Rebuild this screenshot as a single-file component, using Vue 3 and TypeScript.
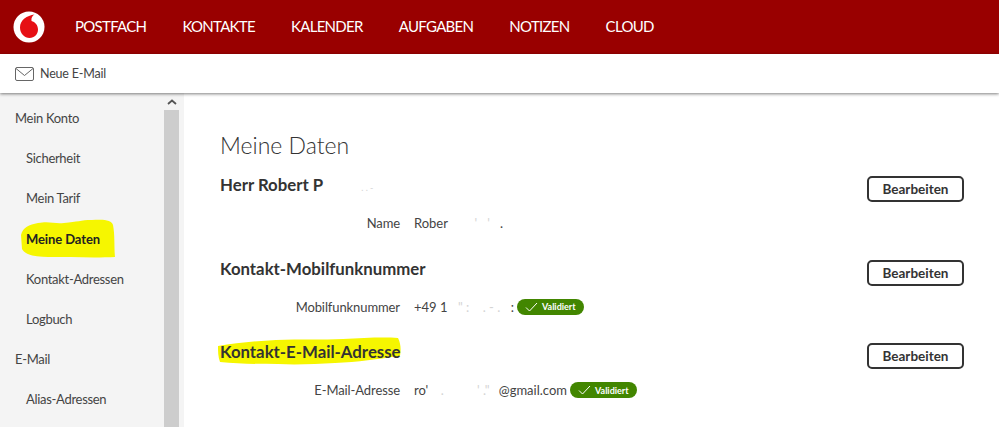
<script setup lang="ts">
const navItems = ["POSTFACH", "KONTAKTE", "KALENDER", "AUFGABEN", "NOTIZEN", "CLOUD"];

const menu = [
  { label: "Mein Konto", top: true },
  { label: "Sicherheit" },
  { label: "Mein Tarif" },
  { label: "Meine Daten", active: true },
  { label: "Kontakt-Adressen" },
  { label: "Logbuch" },
  { label: "E-Mail", top: true },
  { label: "Alias-Adressen" },
];

// die geschwaerzten Stellen sind nur noch ein paar helle Reste
const sections = [
  { title: "Herr Robert P", specks: ". . -", marked: false, field: "Name", head: "Rober", mid: "     '   '", tail: ".", width: 89, badge: false },
  { title: "Kontakt-Mobilfunknummer", specks: "", marked: false, field: "Mobilfunknummer", head: "+49 1", mid: "\" :    . - .", tail: ":", width: 100, badge: true },
  { title: "Kontakt-E-Mail-Adresse", specks: "", marked: true, field: "E-Mail-Adresse", head: "ro'", mid: " .          ' .\"", tail: "@gmail.com", width: 153, badge: true },
];
</script>

<template>
  <div class="page">
    <header class="topbar">
      <svg class="logo" viewBox="0 0 32 32" width="32" height="32">
        <circle cx="16" cy="16" r="15.5" fill="#fff" />
        <path
          d="M21.5 3.500C14 4.500 7 9 7 16.500C7 22.500 11.500 27 16.500 27C21.500 27 25 23 25 18.500C25 14 22 11 18.500 10C18 7 19.500 4.500 21.500 3.500Z"
          fill="#e60f14"
        />
      </svg>
      <nav class="nav">
        <a v-for="item in navItems" :key="item">{{ item }}</a>
      </nav>
    </header>

    <div class="toolbar">
      <svg width="19" height="14" viewBox="0 0 19 14" fill="none" stroke="#666" stroke-width="1">
        <rect x="0.5" y="0.5" width="18" height="13" rx="1.500" />
        <path d="M1 1.500l8.500 7 8.500-7" />
      </svg>
      <span>Neue E-Mail</span>
    </div>

    <div class="body">
      <aside class="sidebar">
        <ul class="menu">
          <li v-for="entry in menu" :key="entry.label" :class="{ top: entry.top, active: entry.active }">
            <span class="label">
              <svg v-if="entry.active" class="blob blob-menu" viewBox="0 0 96 40" width="96" height="40">
                <path d="M1 16C3 8 9 6 18 4C30 2 34 5 44 4C58 3 60 1 72 1C84 0 92 1 93 6C95 16 94 28 95 38C76 39 50 38 28 38C16 38 5 36 2 30Z" />
              </svg>
              {{ entry.label }}
            </span>
          </li>
        </ul>
        <div class="scrollbar">
          <svg width="10" height="6" viewBox="0 0 10 6" fill="none" stroke="#555" stroke-width="1.800">
            <path d="M1 5l4-3.500 4 3.500" />
          </svg>
          <div class="thumb"></div>
        </div>
      </aside>

      <main class="content">
        <h1>Meine Daten</h1>
        <section v-for="s in sections" :key="s.title" class="block">
          <div class="block-head">
            <h2>
              <span class="title">
                <svg v-if="s.marked" class="blob blob-title" viewBox="0 0 183 28" width="183" height="28">
                  <path d="M0 9C18 6 38 4 58 3C82 2 105 3 125 2C145 1 165 0 180 1C183 7 183 13 182 19C160 22 140 25 117 26C98 27 78 28 60 27C40 27 20 27 2 25C0 20 0 14 0 9Z" />
                </svg>
                {{ s.title }}
              </span>
              <span v-if="s.specks" class="specks title-specks">{{ s.specks }}</span>
            </h2>
            <button type="button">Bearbeiten</button>
          </div>
          <div class="row">
            <div class="field">{{ s.field }}</div>
            <div class="value" :style="{ width: s.width + 'px' }">
              <span>{{ s.head }}</span>
              <span class="specks">{{ s.mid }}</span>
              <span>{{ s.tail }}</span>
            </div>
            <div v-if="s.badge" class="badge">
              <svg width="13" height="10" viewBox="0 0 13 10" fill="none" stroke="#fff" stroke-width="1">
                <path d="M1 5.500l3.500 3.500 7.500-8" />
              </svg>
              Validiert
            </div>
          </div>
        </section>
      </main>
    </div>
  </div>
</template>

<style>
html,
body {
  margin: 0;
  overflow: hidden;
}
</style>

<style scoped>
.page {
  width: 999px;
  height: 427px;
  overflow: hidden;
  display: flex;
  flex-direction: column;
  font-family: Lato, "Open Sans", sans-serif;
  color: #333;
  background: #fff;
}

.topbar {
  height: 54px;
  flex: none;
  background: #990000;
  display: flex;
  align-items: center;
  padding-left: 13px;
  box-sizing: border-box;
}

.logo {
  flex: none;
}

.nav {
  display: flex;
  gap: 36px;
  margin-left: 30px;
  margin-bottom: 2px;
  color: #fff;
  font-size: 15px;
  letter-spacing: -0.7px;
}

.toolbar {
  height: 39px;
  flex: none;
  display: flex;
  align-items: center;
  gap: 6px;
  padding-left: 15px;
  font-size: 12.500px;
  color: #444;
  box-shadow: 0 1px 3px rgba(0, 0, 0, 0.5);
  position: relative;
  z-index: 1;
}

.toolbar span {
  letter-spacing: -0.2px;
}

.body {
  flex: 1;
  display: flex;
  min-height: 0;
}

.sidebar {
  width: 184px;
  flex: none;
  display: flex;
  background: #f4f4f4;
  padding-right: 5px;
  box-sizing: border-box;
}

.menu {
  list-style: none;
  margin: 0;
  padding: 5px 0 0;
  width: 164px;
  font-size: 13px;
  letter-spacing: -0.3px;
  color: #444;
}

.menu li {
  height: 40.200px;
  display: flex;
  align-items: center;
  padding-left: 26px;
}

.menu li.top {
  padding-left: 15px;
}

.label {
  position: relative;
  z-index: 0;
}

.menu li.active .label {
  font-weight: 700;
  letter-spacing: -0.1px;
  color: #222;
}

.blob {
  position: absolute;
  z-index: -1;
  fill: #f6f600;
}

.blob-menu {
  left: -6px;
  top: -12px;
}

.blob-title {
  left: -2px;
  top: -5px;
}

.scrollbar {
  width: 15px;
  flex: none;
  display: flex;
  flex-direction: column;
  align-items: center;
}

.scrollbar svg {
  margin: 6px 0 5px;
}

.thumb {
  flex: 1;
  width: 100%;
  background: #cdcdcd;
}

.content {
  flex: 1;
  padding: 37px 35px 0 36px;
}

h1 {
  margin: 0 0 15px;
  font-size: 23px;
  font-weight: 300;
  color: #333;
  line-height: 30px;
}

.block {
  margin-bottom: 26.500px;
}

.block-head {
  display: flex;
  justify-content: space-between;
  align-items: flex-start;
  height: 27px;
}

h2 {
  margin: 0;
  font-size: 16.800px;
  line-height: 20px;
  font-weight: 700;
  color: #333;
  white-space: nowrap;
}

.title {
  position: relative;
  z-index: 0;
  display: inline-block;
}

.title-specks {
  font-size: 9px;
  font-weight: 400;
  margin-left: 38px;
}

.specks {
  color: #d4d4d4;
  white-space: pre;
}

button {
  width: 97px;
  height: 26px;
  margin-top: 1px;
  border: 2px solid #333;
  border-radius: 5px;
  background: #fff;
  font-family: inherit;
  font-size: 13.500px;
  font-weight: 700;
  color: #333;
  padding: 0;
}

.row {
  display: flex;
  align-items: center;
  margin-top: 12px;
  height: 18px;
  font-size: 13px;
  color: #444;
}

.field {
  width: 180px;
  text-align: right;
  margin-right: 14px;
  letter-spacing: -0.1px;
}

.value {
  display: flex;
  justify-content: space-between;
  align-items: center;
}

.badge {
  display: flex;
  align-items: center;
  gap: 4px;
  height: 16px;
  margin-left: 3px;
  padding: 0 8px;
  border-radius: 8px;
  background: #428600;
  color: #fff;
  font-size: 9px;
  font-weight: 700;
}
</style>
